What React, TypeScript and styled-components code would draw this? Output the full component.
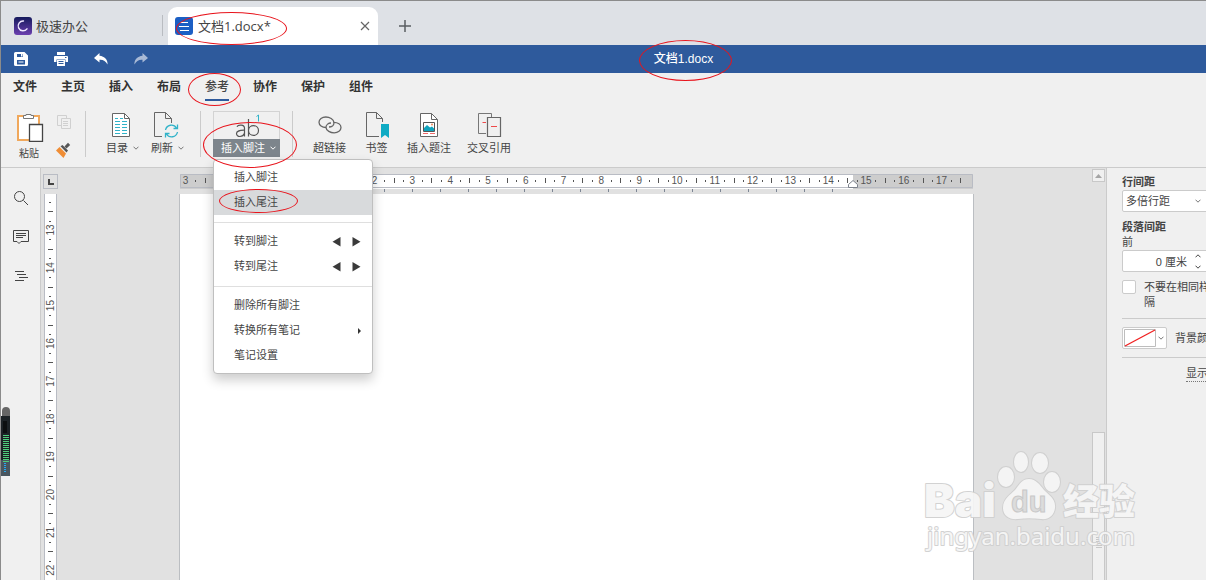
import React from 'react';
import styled, { createGlobalStyle, css } from 'styled-components';

const GlobalStyle = createGlobalStyle`
  *, *::before, *::after { box-sizing: border-box; }
  body {
    margin: 0;
    background: #f0f0f0;
    color: #444;
    font-family: "Liberation Sans", "Noto Sans CJK SC", sans-serif;
    font-size: 11px;
    line-height: 15px;
  }
  button, select, input { font: inherit; color: inherit; }
  button { padding: 0; border: 0; background: none; cursor: pointer; }
  svg { display: block; flex: none; }
`;

const Window = styled.div`
  position: relative;
  display: flex;
  flex-direction: column;
  height: 100vh;
  overflow: hidden;
  border: solid #8b8b8b;
  border-width: 1px 0 0 1px;
`;

/* Red ring drawn over a control */
const Ring = styled.span<{ $x: number; $y: number; $w: number; $h: number }>`
  position: absolute;
  z-index: 20;
  left: ${(p) => p.$x}px;
  top: ${(p) => p.$y}px;
  width: ${(p) => p.$w}px;
  height: ${(p) => p.$h}px;
  border: 1px solid #e8141c;
  border-radius: 50%;
  pointer-events: none;
`;

/* ---------- Window tabs ---------- */
const TabStrip = styled.header`
  display: flex;
  align-items: flex-end;
  height: 44px;
  flex: none;
  background: #dee1e6;
  font-family: "Open Sans", "Noto Sans CJK SC", sans-serif;
  font-size: 13px;
  line-height: 18px;
`;

const HomeTab = styled.button`
  display: flex;
  align-items: center;
  gap: 4px;
  width: 162px;
  height: 21px;
  margin: 0 5px 9px 0;
  padding-left: 13px;
  border-right: 1px solid #b9bcc1;
`;

const DocTab = styled.div`
  position: relative;
  display: flex;
  align-items: center;
  gap: 5px;
  width: 210px;
  height: 38px;
  padding: 0 8px 0 7px;
  border-radius: 9px 9px 0 0;
  background: #fff;
`;

const DocName = styled.span`
  flex: 1;
`;

const AddTab = styled.button`
  margin: 0 0 12px 20px;
`;

/* ---------- Title bar ---------- */
const TitleBar = styled.div`
  display: grid;
  grid-template-columns: 1fr auto 1fr;
  align-items: center;
  flex: none;
  height: 28px;
  background: #2e5a9c;
  color: #fff;
`;

const QuickActions = styled.div`
  display: flex;
  gap: 24px;
  padding-left: 12px;
`;

const IconButton = styled.button`
  display: flex;
  width: 16px;
  height: 16px;
  align-items: center;
  justify-content: center;
`;

const DocTitle = styled.h1`
  margin: 0;
  padding-left: 160px;
  font-size: 12px;
  font-weight: 500;
  line-height: 16px;
`;

const TitleShell = styled.span`
  position: relative;
  display: block;
`;

/* ---------- Ribbon ---------- */
const RibbonTabs = styled.nav`
  display: flex;
  gap: 24px;
  flex: none;
  height: 28px;
  padding: 5px 12px 0;
`;

const RibbonTab = styled.button<{ $active?: boolean }>`
  position: relative;
  height: 23px;
  padding-bottom: 2px;
  border-bottom: 2px solid ${(p) => (p.$active ? '#2e5a9c' : 'transparent')};
  color: ${(p) => (p.$active ? '#444' : '#333')};
  font-size: 12px;
  font-weight: ${(p) => (p.$active ? 500 : 700)};
  line-height: 19px;
`;

const Toolbar = styled.div`
  display: flex;
  flex: none;
  height: 67px;
  padding: 10px 0 0 13px;
  border-bottom: 1px solid #cbcbcb;
`;

const Group = styled.div`
  display: flex;
  align-items: flex-start;
`;

const Separator = styled.div<{ $before: number; $after: number }>`
  width: 1px;
  height: 46px;
  margin: 0 ${(p) => p.$after}px 0 ${(p) => p.$before}px;
  background: #cbcbcb;
`;

const ToolButton = styled.button<{ $pad: number }>`
  display: flex;
  flex-direction: column;
  align-items: center;
  min-width: 45px;
  padding: 0 ${(p) => p.$pad}px;
  white-space: nowrap;
`;

const IconSlot = styled.span<{ $arrow?: boolean }>`
  display: flex;
  align-items: center;
  height: 28px;
  padding-right: ${(p) => (p.$arrow ? 4 : 0)}px;
`;

const ToolLabel = styled.span`
  display: flex;
  align-items: center;
  gap: 5px;
  height: 18px;
`;

const PasteButton = styled.button`
  width: 30px;
  font-size: 10px;
  line-height: 24px;
`;

const SmallTools = styled.div`
  display: flex;
  flex-direction: column;
  gap: 12px;
  padding: 3px 0 0 12px;
`;

const MenuAnchor = styled.div`
  position: relative;
`;

const NoteButton = styled.button`
  display: flex;
  flex-direction: column;
  width: 67px;
`;

const NoteIcon = styled.span`
  display: flex;
  justify-content: center;
  width: 100%;
  height: 28px;
  border: 1px solid #d3d3d3;
  border-bottom: 0;
`;

const NoteLabel = styled.span`
  display: flex;
  align-items: center;
  gap: 5px;
  width: 100%;
  height: 18px;
  padding-left: 8px;
  background: #7d858c;
  color: #fff;
  white-space: nowrap;
`;

/* ---------- Footnote menu ---------- */
const Menu = styled.ul`
  position: absolute;
  z-index: 10;
  top: 48px;
  left: 0;
  width: 160px;
  margin: 0;
  padding: 5px 0;
  border: 1px solid #bfbfbf;
  border-radius: 4px;
  background: #fff;
  box-shadow: 0 6px 12px rgba(0, 0, 0, 0.2);
  list-style: none;
`;

const MenuRow = styled.li<{ $active?: boolean }>`
  position: relative;
  display: flex;
  align-items: center;
  height: 25px;
  padding: 0 11px 0 20px;
  ${(p) => p.$active && css`background: #d8dadc;`}
`;

const MenuItem = styled.button`
  flex: 1;
  text-align: left;
`;

const MenuDivider = styled.li`
  height: 1px;
  margin: 7px 0 6px;
  background: #dfdfdf;
`;

const Arrows = styled.span`
  display: flex;
  gap: 11px;
`;

const IconArrow = styled.button`
  display: block;
`;

/* ---------- Workspace ---------- */
const Body = styled.div`
  display: flex;
  flex: 1;
  min-height: 0;
`;

const SideBar = styled.aside`
  display: flex;
  flex: none;
  flex-direction: column;
  align-items: center;
  gap: 23px;
  width: 40px;
  padding-top: 22px;
  border-right: 1px solid #cbcbcb;
`;

const Editor = styled.main`
  display: flex;
  flex: 1;
  min-width: 0;
  background: #e1e1e1;
`;

const RulerColumn = styled.div`
  display: flex;
  flex: none;
  flex-direction: column;
  gap: 5px;
  width: 19px;
  padding: 6px 0 0 2px;
`;

const TabStop = styled.button`
  display: flex;
  align-items: center;
  justify-content: center;
  flex: none;
  width: 15px;
  height: 15px;
  border: 1px solid #b9bcc4;
`;

const VerticalRuler = styled.div`
  flex: 1;
  width: 13px;
  margin-left: 1px;
  overflow: hidden;
  border: solid #b9bcc4;
  border-width: 0 1px;
  background: #fff;
`;

const PageArea = styled.div`
  display: flex;
  flex: 1;
  flex-direction: column;
  align-items: center;
  min-width: 0;
  overflow: hidden;
  padding-top: 6px;
`;

const Page = styled.article`
  flex: 1;
  width: 795px;
  border: solid #bbbec2;
  border-width: 0 1px;
  background: #fff;
`;

const ScrollBar = styled.div`
  display: flex;
  flex: none;
  flex-direction: column;
  justify-content: space-between;
  width: 14px;
  padding-top: 1px;
`;

const ScrollUp = styled.button`
  display: flex;
  align-items: center;
  justify-content: center;
  width: 13px;
  height: 13px;
  border: 1px solid #c8c8c8;
  background: #f0f0f0;
`;

const ScrollThumb = styled.div`
  display: flex;
  justify-content: center;
  width: 13px;
  height: 36%;
  padding-top: 103px;
  border: 1px solid #c8c8c8;
  border-bottom: 0;
  background: #f0f0f0;
`;

/* ---------- Paragraph panel ---------- */
const Panel = styled.aside`
  flex: none;
  width: 100px;
  padding: 7px 0 0 15px;
  overflow: hidden;
  border-left: 1px solid #cbcbcb;
  white-space: nowrap;
`;

const Heading = styled.label`
  display: block;
  font-weight: 700;
`;

const PlainLabel = styled.label`
  display: block;
`;

const Field = styled.div`
  display: flex;
  align-items: center;
  width: 87px;
  height: 22px;
  margin-bottom: 8px;
  padding-right: 7px;
  border: 1px solid #cbcbcb;
  border-radius: 2px;
  background: #fff;
`;

const Select = styled.select`
  flex: 1;
  min-width: 0;
  height: 20px;
  padding: 0 0 0 3px;
  border: 0;
  background: none;
  appearance: none;
`;

const NumberInput = styled.input`
  flex: 1;
  min-width: 0;
  height: 20px;
  padding: 0 8px 0 0;
  border: 0;
  background: none;
  text-align: right;
`;

const Spinner = styled.span`
  display: flex;
  flex-direction: column;
  gap: 7px;
`;

const CheckRow = styled.label`
  display: flex;
  align-items: flex-start;
  gap: 8px;
`;

const CheckBox = styled.input`
  flex: none;
  width: 14px;
  height: 14px;
  margin: 0;
  border: 1px solid #cbcbcb;
  border-radius: 2px;
  background: #fff;
  appearance: none;
`;

const Rule = styled.hr`
  height: 1px;
  margin: 8px 0;
  border: 0;
  background: #cbcbcb;
`;

const ColorRow = styled.div`
  display: flex;
  align-items: center;
  gap: 8px;
`;

const Swatch = styled.button`
  display: flex;
  align-items: center;
  gap: 2px;
  flex: none;
  width: 45px;
  height: 22px;
  padding: 1px;
  border: 1px solid #cbcbcb;
  border-radius: 2px;
  background: #fff;
`;

const AdvancedLink = styled.a`
  display: block;
  width: 60px;
  margin-left: 64px;
  border-bottom: 1px dotted #777;
  color: inherit;
  text-decoration: none;
`;

const Watermark = styled.svg`
  position: absolute;
  right: 60px;
  bottom: 20px;
  z-index: 15;
  pointer-events: none;
`;

const DeviceMeter = styled.svg`
  position: absolute;
  left: 0;
  top: 405px;
  z-index: 15;
`;

/* ---------- Icons ---------- */
const Chevron = ({ color = '#777', up = false }: { color?: string; up?: boolean }) => (
  <svg width="6" height="4" viewBox="0 0 6 4" fill="none" stroke={color}>
    <path d={up ? 'M.5 3.3 3 .8l2.5 2.5' : 'M.5.7 3 3.2 5.5.7'} />
  </svg>
);

const Triangle = ({ left = false }: { left?: boolean }) => (
  <svg width="9" height="10" viewBox="0 0 9 10" fill="#3a3a3a">
    <path d={left ? 'M8.5 0v9.500L.5 4.700z' : 'M.5 0v9.500l8-4.800z'} />
  </svg>
);

const AppLogo = () => (
  <svg width="18" height="18" viewBox="0 0 18 18">
    <defs>
      <linearGradient id="logo" x1="0" y1="0" x2="0" y2="1">
        <stop offset="0" stopColor="#151a5c" />
        <stop offset="1" stopColor="#6b3fb0" />
      </linearGradient>
    </defs>
    <rect width="18" height="18" rx="3" fill="url(#logo)" />
    <path d="M13 11.800A4.900 4.900 0 1 1 9.500 4" fill="none" stroke="#efe8ff" strokeWidth="1.400" strokeLinecap="round" />
  </svg>
);

const DocLogo = () => (
  <svg width="18" height="18" viewBox="0 0 18 18">
    <rect width="18" height="18" rx="3" fill="#1c5fc4" />
    <path d="M5 5.500h8M4 9.500h10M5 13.500h9" stroke="#fff" strokeWidth="1.200" />
  </svg>
);

const SaveIcon = () => (
  <svg width="14" height="14" viewBox="0 0 14 14">
    <path d="M1.500 0h9L14 3.500v9a1.500 1.500 0 0 1-1.500 1.500h-11A1.500 1.500 0 0 1 0 12.500v-11A1.500 1.500 0 0 1 1.500 0z" fill="#fff" />
    <path d="M3 2h6v3H3zM3 8h8v4.500H3z" fill="#2e5a9c" />
    <path d="M7 2h1.500v2.500H7zM4.500 9.500h5v1h-5z" fill="#fff" />
  </svg>
);

const PrintIcon = () => (
  <svg width="14" height="14" viewBox="0 0 14 14">
    <path d="M3 0h8v3H3zM1 4h12a1 1 0 0 1 1 1v5h-2.500V7.500h-9V10H0V5a1 1 0 0 1 1-1zM3 8h8v6H3z" fill="#fff" />
    <path d="M4.500 9.500h5M4.500 11.500h5M11 5.500h1.500" stroke="#2e5a9c" />
  </svg>
);

const UndoIcon = ({ flip = false }: { flip?: boolean }) => (
  <svg width="14" height="12" viewBox="0 0 14 12">
    <path
      d={
        flip
          ? 'M8.500 0 14 5 8.500 9.500V6.800C5 6.500 2.200 8 .5 11.500 0 7 3.500 3.200 8.500 2.800z'
          : 'M5.500 0 0 5l5.500 4.500V6.800C9 6.500 11.800 8 13.500 11.500 14 7 10.500 3.200 5.500 2.800z'
      }
      fill={flip ? '#a9bad6' : '#fff'}
    />
  </svg>
);

const PasteIcon = () => (
  <svg width="30" height="31" viewBox="0 0 30 31" fill="none">
    <path d="M4 5h21v24H4z" fill="#fff" stroke="#f0a85c" strokeWidth="2" />
    <path d="M9.500 7.500v-3h2.500v-1h5v1h2.500v3z" fill="#fff" stroke="#777" />
    <path d="M15.500 13.500h13v17h-13z" fill="#fff" stroke="#444" strokeWidth="1.300" />
  </svg>
);

const CopyIcon = () => (
  <svg width="16" height="16" viewBox="0 0 16 16" fill="#f0f0f0" stroke="#d0d0d0">
    <path d="M1.500 1.500h9v10h-9z" />
    <path d="M5.500 4.500h9v10h-9z" />
    <path d="M7 7.500h5M7 9.500h5M7 11.500h5" />
  </svg>
);

const BrushIcon = () => (
  <svg width="16" height="16" viewBox="0 0 16 16">
    <path d="M0 8.500 3.500 5l6.500 6.500L7.500 16z" fill="#ef8d35" />
    <path d="m4.500 4.200 2-1.200 5.500 5.500-1.500 2z" fill="#555" />
    <path d="M8.500 4.500 12 .8 14.200 3 10.500 6.500z" fill="#555" />
  </svg>
);

const ContentsIcon = () => (
  <svg width="20" height="26" viewBox="0 0 20 26" fill="none">
    <path d="M1.500 1.500h12l5 5v18h-17z" fill="#fff" stroke="#666" />
    <path d="M13.500 1.500v5h5" stroke="#666" />
    <path d="M4 6.500h3M9 6.500h3M4 9.500h5M11 9.500h5M4 12.500h5M11 12.500h5M4 15.500h5M11 15.500h5M4 18.500h5M11 18.500h5M4 21.500h5M11 21.500h5" stroke="#31b3c9" />
  </svg>
);

const RefreshIcon = () => (
  <svg width="26" height="28" viewBox="0 0 26 28" fill="none">
    <path d="M9 25.500H1.500v-24h11l6 6V12M12.500 1.500v6h6" stroke="#666" />
    <path d="M12.500 19a6 6 0 0 1 11-2M24.500 21a6 6 0 0 1-11 2M24.500 13.500v4h-4M12.500 26.500v-4h4" stroke="#31b3c9" strokeWidth="1.300" />
  </svg>
);

const FootnoteIcon = () => (
  <svg width="30" height="27" viewBox="0 0 30 27">
    <g fill="none" stroke="#555" strokeWidth="1.200">
      <path d="M5 14.800c1-2.300 7.500-2.800 7.500 1.400v8.300M12.500 18c-4 .3-8 .4-8 3.500 0 4 6.500 4 8-.2" />
      <path d="M16.500 7v17.500M16.500 18.500c0-6.500 10-6.500 10 0s-10 6.500-10 0" />
    </g>
    <path d="M24.500 4.500 26.500 3v6.500" fill="none" stroke="#31b3c9" />
  </svg>
);

const LinkIcon = () => (
  <svg width="26" height="20" viewBox="0 0 26 20" fill="none" stroke="#666" strokeWidth="1.300">
    <path d="M9 12.500C5 12.500 2 10.200 2 7.300s3-5.300 6.800-5.300c3.500 0 8.200 2 8.200 5.800 0 2.700-2.500 4.200-5 4.200" />
    <path d="M16.500 7.300c4.500 0 7.500 2.200 7.500 5.300 0 2.900-3 5.200-6.800 5.200-3.500 0-8.200-2-8.200-5.500 0-2.700 2.500-4.300 5-4.300" />
  </svg>
);

const BookmarkIcon = () => (
  <svg width="24" height="28" viewBox="0 0 24 28" fill="none">
    <path d="M14 25.500H1.500v-24h10l6 6V11M11.500 1.500v6h6" stroke="#666" />
    <path d="M16 13h8v14l-4-3-4 3z" fill="#0fabc4" />
  </svg>
);

const CaptionIcon = () => (
  <svg width="20" height="26" viewBox="0 0 20 26" fill="none">
    <path d="M1.500 1.500h11l6 6v17h-17z" fill="#fff" stroke="#666" />
    <path d="M12.500 1.500v6h6" stroke="#666" />
    <path d="M4.500 10.500h11v9h-11z" stroke="#555" />
    <path d="M5 19v-3l3-3 3 2.500 2-1 2 2V19z" fill="#0fa3bd" />
    <circle cx="13" cy="12.500" r="1" fill="#f08a5a" />
    <path d="M4 21.500h5M11 21.500h5" stroke="#f06a6a" />
  </svg>
);

const CrossRefIcon = () => (
  <svg width="26" height="26" viewBox="0 0 26 26" fill="none">
    <path d="M10 21.500H2.500v-20h13V5" stroke="#777" />
    <path d="M11.500 5.500h13v19h-13z" stroke="#666" strokeWidth="1.200" />
    <path d="M6.500 10.500H10M15 14.500h6" stroke="#ee4a4a" />
  </svg>
);

/* ---------- Rulers ---------- */
const CM = 37.8;
const ORIGIN = 120;
/* The open menu hides the strip between these two positions */
const leftMarks = [-3];
const rightMarks = Array.from({ length: 16 }, (_, i) => i + 2);

const HorizontalRuler = () => (
  <svg width="795" height="20" viewBox="0 0 795 20">
    <rect x="1" width="793" height="15" fill="#cdcdcd" />
    <rect x="114" width="560" height="15" fill="#fff" />
    <path d="M1.500.5h792v13h-792z" fill="none" stroke="#b9bcc4" />
    {[...leftMarks, ...rightMarks].map((n) => {
      const x = ORIGIN + n * CM;
      return (
        <g key={n} fill="#555">
          <text x={x} y="10" fontSize="10" textAnchor="middle">{Math.abs(n)}</text>
          <rect x={Math.round(x + CM / 4)} y="6" width="1" height="2" />
          <rect x={Math.round(x + CM / 2)} y="4" width="1" height="5" />
          {n < 17 && <rect x={Math.round(x + (CM * 3) / 4)} y="6" width="1" height="2" />}
        </g>
      );
    })}
    {Array.from({ length: 17 }, (_, i) => (
      <rect key={i} x={205 + i * 28} y="15" width="1" height="3" fill="#7d8694" />
    ))}
    <path d="M669.500 13.500v-3l4.500-4 4.500 4v3z" fill="#fff" stroke="#7c828c" />
  </svg>
);

const VerticalScale = () => (
  <svg width="11" height="400" viewBox="0 0 11 400">
    {Array.from({ length: 11 }, (_, i) => {
      const y = 36 + (i - 1) * CM;
      return (
        <g key={i} fill="#555">
          {i > 0 && (
            <text transform={`translate(9 ${y}) rotate(-90)`} fontSize="10" textAnchor="middle">{12 + i}</text>
          )}
          <rect x="4" y={Math.round(y + CM / 4)} width="2" height="1" />
          <rect x="3" y={Math.round(y + CM / 2)} width="5" height="1" />
          <rect x="4" y={Math.round(y + (CM * 3) / 4)} width="2" height="1" />
        </g>
      );
    })}
  </svg>
);

const BrandMark = () => (
  <Watermark width="224" height="110" viewBox="0 0 224 110">
    <g fill="#f6f6f6" stroke="#cfcfcf" strokeWidth="2" strokeLinejoin="round" paintOrder="stroke" opacity=".92">
      <text x="2" y="67" fontSize="46" fontWeight="900" fontFamily="Inter, Liberation Sans, sans-serif">Bai</text>
      <ellipse cx="84" cy="27" rx="8" ry="10" />
      <ellipse cx="99" cy="12" rx="7" ry="10" />
      <ellipse cx="118" cy="13" rx="8" ry="10" />
      <ellipse cx="130" cy="32" rx="8" ry="10" />
      <path d="M107 29c7 0 11 6 15 11 5 5 12 9 11 18-1 8-7 12-14 11-8-1-16-1-23 0-8 1-15-3-15-11 0-9 7-13 12-18 4-5 7-11 14-11z" />
      <text x="141" y="65" fontSize="36" fontWeight="900" fontFamily="Noto Sans CJK SC, sans-serif">经验</text>
      <text x="5" y="95" fontSize="24" fontFamily="Noto Sans, sans-serif">jingyan.baidu.com</text>
    </g>
    <text x="89" y="62" fontSize="29" fontWeight="700" fill="#dcdcdc" stroke="#c8c8c8" fontFamily="Liberation Sans, sans-serif">du</text>
  </Watermark>
);

const ribbonTabs = ['文件', '主页', '插入', '布局', '参考', '协作', '保护', '组件'];

const insertTools = [
  { label: '超链接', icon: <LinkIcon /> },
  { label: '书签', icon: <BookmarkIcon /> },
  { label: '插入题注', icon: <CaptionIcon /> },
  { label: '交叉引用', icon: <CrossRefIcon /> },
];

const NoteMenu = () => (
  <Menu>
    <MenuRow><MenuItem>插入脚注</MenuItem></MenuRow>
    <MenuRow $active>
      <MenuItem>插入尾注</MenuItem>
      <Ring $x={5} $y={-1} $w={79} $h={24} />
    </MenuRow>
    <MenuDivider />
    {['转到脚注', '转到尾注'].map((label) => (
      <MenuRow key={label}>
        <MenuItem>{label}</MenuItem>
        <Arrows>
          <IconArrow aria-label="上一个"><Triangle left /></IconArrow>
          <IconArrow aria-label="下一个"><Triangle /></IconArrow>
        </Arrows>
      </MenuRow>
    ))}
    <MenuDivider />
    <MenuRow><MenuItem>删除所有脚注</MenuItem></MenuRow>
    <MenuRow>
      <MenuItem>转换所有笔记</MenuItem>
      <svg width="3" height="6" viewBox="0 0 3 6" fill="#333"><path d="M0 0v6l3-3z" /></svg>
    </MenuRow>
    <MenuRow><MenuItem>笔记设置</MenuItem></MenuRow>
  </Menu>
);

export default function App() {
  return (
    <Window>
      <GlobalStyle />
      <TabStrip>
        <HomeTab><AppLogo />极速办公</HomeTab>
        <DocTab>
          <DocLogo />
          <DocName>文档1.docx*</DocName>
          <button aria-label="关闭">
            <svg width="10" height="10" viewBox="0 0 10 10" stroke="#666" strokeWidth="1.200"><path d="m1 1 8 8M9 1 1 9" /></svg>
          </button>
          <Ring $x={8} $y={5} $w={111} $h={33} />
        </DocTab>
        <AddTab aria-label="新建">
          <svg width="14" height="14" viewBox="0 0 14 14" stroke="#5a5d61" strokeWidth="1.500"><path d="M7 1v12M1 7h12" /></svg>
        </AddTab>
      </TabStrip>

      <TitleBar>
        <QuickActions>
          <IconButton aria-label="保存"><SaveIcon /></IconButton>
          <IconButton aria-label="打印"><PrintIcon /></IconButton>
          <IconButton aria-label="撤销"><UndoIcon /></IconButton>
          <IconButton aria-label="重做"><UndoIcon flip /></IconButton>
        </QuickActions>
        <DocTitle>
          <TitleShell>
            文档1.docx
            <Ring $x={-15} $y={-11} $w={93} $h={41} />
          </TitleShell>
        </DocTitle>
      </TitleBar>

      <RibbonTabs>
        {ribbonTabs.map((name) => (
          <RibbonTab key={name} $active={name === '参考'}>
            {name}
            {name === '参考' && <Ring $x={-17} $y={-5} $w={53} $h={33} />}
          </RibbonTab>
        ))}
      </RibbonTabs>

      <Toolbar>
        <Group>
          <PasteButton><PasteIcon />粘贴</PasteButton>
          <SmallTools>
            <IconButton aria-label="复制"><CopyIcon /></IconButton>
            <IconButton aria-label="格式刷"><BrushIcon /></IconButton>
          </SmallTools>
        </Group>
        <Separator $before={13} $after={14} />
        <Group>
          <ToolButton $pad={6}>
            <IconSlot $arrow><ContentsIcon /></IconSlot>
            <ToolLabel>目录<Chevron /></ToolLabel>
          </ToolButton>
          <ToolButton $pad={6}>
            <IconSlot $arrow><RefreshIcon /></IconSlot>
            <ToolLabel>刷新<Chevron /></ToolLabel>
          </ToolButton>
        </Group>
        <Separator $before={10} $after={12} />
        <MenuAnchor>
          <NoteButton>
            <NoteIcon><FootnoteIcon /></NoteIcon>
            <NoteLabel>插入脚注<Chevron color="#fff" /></NoteLabel>
          </NoteButton>
          <NoteMenu />
          <Ring $x={-10} $y={11} $w={94} $h={46} />
        </MenuAnchor>
        <Separator $before={12} $after={12} />
        <Group>
          {insertTools.map((tool) => (
            <ToolButton key={tool.label} $pad={8}>
              <IconSlot>{tool.icon}</IconSlot>
              <ToolLabel>{tool.label}</ToolLabel>
            </ToolButton>
          ))}
        </Group>
      </Toolbar>

      <Body>
        <SideBar>
          <IconButton aria-label="查找">
            <svg width="16" height="16" viewBox="0 0 16 16" fill="none" stroke="#444"><circle cx="6.500" cy="6.500" r="5" /><path d="m10.500 10.500 4.500 4.500" /></svg>
          </IconButton>
          <IconButton aria-label="批注">
            <svg width="16" height="16" viewBox="0 0 16 16" fill="none" stroke="#444"><path d="M.5 1.500h15v11H8l-2 2-2-2H.5zM3 4.500h10M3 6.500h10M3 8.500h7" /></svg>
          </IconButton>
          <IconButton aria-label="导航">
            <svg width="16" height="16" viewBox="0 0 16 16" stroke="#444"><path d="M2 3.500h9M4 6.500h9M6 9.500h9M2 12.500h9" /></svg>
          </IconButton>
        </SideBar>

        <Editor>
          <RulerColumn>
            <TabStop aria-label="制表位">
              <svg width="7" height="7" viewBox="0 0 7 7" fill="none" stroke="#444" strokeWidth="2"><path d="M2 1v5h5" /></svg>
            </TabStop>
            <VerticalRuler><VerticalScale /></VerticalRuler>
          </RulerColumn>
          <PageArea>
            <HorizontalRuler />
            <Page />
          </PageArea>
          <ScrollBar>
            <ScrollUp aria-label="向上滚动">
              <svg width="7" height="4" viewBox="0 0 7 4" fill="#a5a5a5"><path d="M0 4 3.500 0 7 4z" /></svg>
            </ScrollUp>
            <ScrollThumb>
              <svg width="6" height="14" viewBox="0 0 6 14" stroke="#c8c8c8"><path d="M0 1.500h6M0 3.500h6M0 5.500h6M0 7.500h6M0 9.500h6M0 11.500h6" /></svg>
            </ScrollThumb>
          </ScrollBar>
        </Editor>

        <Panel>
          <Heading htmlFor="line-spacing">行间距</Heading>
          <Field>
            <Select id="line-spacing"><option>多倍行距</option></Select>
            <Chevron />
          </Field>
          <Heading as="div">段落间距</Heading>
          <PlainLabel htmlFor="before">前</PlainLabel>
          <Field>
            <NumberInput id="before" defaultValue="0 厘米" />
            <Spinner><Chevron up color="#444" /><Chevron color="#444" /></Spinner>
          </Field>
          <CheckRow>
            <CheckBox type="checkbox" />
            <span>不要在相同样<br />隔</span>
          </CheckRow>
          <Rule />
          <ColorRow>
            <Swatch id="back-color" aria-label="背景颜色">
              <svg width="32" height="18" viewBox="0 0 32 18" fill="none"><path d="M.5.5h31v17H.5z" stroke="#bdbdbd" /><path d="m1 17 30-16" stroke="#f02020" strokeWidth="1.300" /></svg>
              <Chevron />
            </Swatch>
            <PlainLabel htmlFor="back-color">背景颜</PlainLabel>
          </ColorRow>
          <Rule />
          <AdvancedLink href="#advanced">显示</AdvancedLink>
        </Panel>
      </Body>

      <DeviceMeter width="10" height="72" viewBox="0 0 10 72">
        <path d="M1 10V5a4 4 0 0 1 8 0v5z" fill="#666" />
        <path d="M0 10h9v45H0z" fill="#1c2226" />
        <path d="M0 54h9v16H0z" fill="#49565f" />
        <path d="M4 15v12" stroke="#0c0f10" strokeWidth="4" />
        <path d="M5 29v27" stroke="#4fce7c" strokeWidth="6" strokeDasharray="1 1" />
        <path d="M4 57v9" stroke="#27a9f0" strokeWidth="2" strokeDasharray="1 1" />
      </DeviceMeter>
      <BrandMark />
    </Window>
  );
}
